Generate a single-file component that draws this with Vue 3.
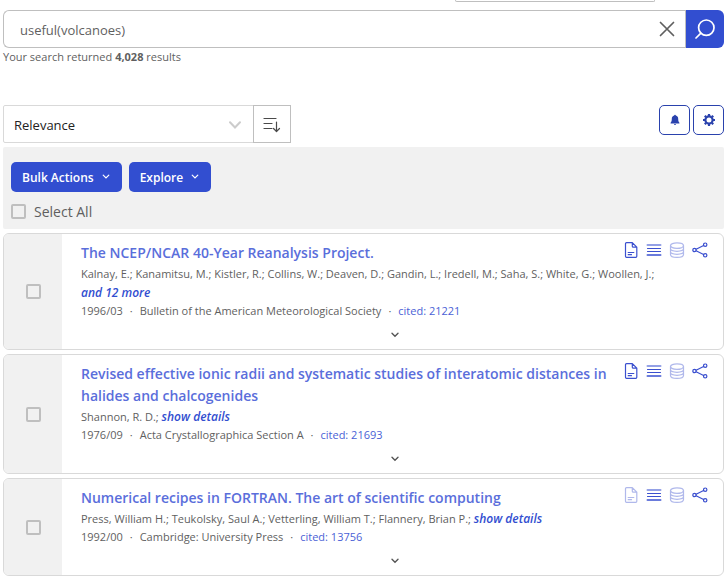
<script setup>
import { ref } from 'vue'

const query = ref('useful(volcanoes)')
const sort = ref('Relevance')
const results = [
  {
    id: 1,
    title: 'The NCEP/NCAR 40-Year Reanalysis Project.',
    authors: 'Kalnay, E.; Kanamitsu, M.; Kistler, R.; Collins, W.; Deaven, D.; Gandin, L.; Iredell, M.; Saha, S.; White, G.; Woollen, J.;',
    more: 'and 12 more',
    date: '1996/03',
    journal: 'Bulletin of the American Meteorological Society',
    cited: 21221,
    fullText: true,
  },
  {
    id: 2,
    title: 'Revised effective ionic radii and systematic studies of interatomic distances in halides and chalcogenides',
    authors: 'Shannon, R. D.;',
    more: 'show details',
    date: '1976/09',
    journal: 'Acta Crystallographica Section A',
    cited: 21693,
    fullText: true,
  },
  {
    id: 3,
    title: 'Numerical recipes in FORTRAN. The art of scientific computing',
    authors: 'Press, William H.; Teukolsky, Saul A.; Vetterling, William T.; Flannery, Brian P.;',
    more: 'show details',
    date: '1992/00',
    journal: 'Cambridge: University Press',
    cited: 13756,
    fullText: false,
  },
]
</script>

<template>
  <main class="page">
    <div class="stub"></div>
    <form class="search" @submit.prevent>
      <input v-model="query" class="search-input" type="text" aria-label="Search query" />
      <button class="clear" type="button" aria-label="Clear" @click="query = ''">
        <svg width="16" height="16" viewBox="0 0 16 16"><path d="M1.5 1.5 14.5 14.5M14.5 1.5 1.5 14.5" fill="none" stroke="#5f5f5f" stroke-width="1.7" stroke-linecap="round" /></svg>
      </button>
      <button class="submit" type="submit" aria-label="Search">
        <svg width="20" height="20" viewBox="0 0 20 20"><g fill="none" stroke="#fff" stroke-width="1.7" stroke-linecap="round"><circle cx="11.3" cy="8.7" r="7.7" /><path d="M5.9 14.2 1 19" /></g></svg>
      </button>
    </form>
    <p class="count">Your search returned <b>4,028</b> results</p>

    <div class="toolbar">
      <div class="sort">
        <select v-model="sort" class="sort-select" aria-label="Sort by">
          <option>Relevance</option>
          <option>Date</option>
          <option>Citation Count</option>
        </select>
        <svg class="sort-arrow" width="12" height="8" viewBox="0 0 12 8"><path d="M1 1.2 6 6.5 11 1.2" fill="none" stroke="#ccc" stroke-width="2" stroke-linecap="round" /></svg>
        <button class="sort-dir" type="button" aria-label="Sort descending">
          <svg width="18" height="17" viewBox="0 0 18 17"><path d="M1 2.5h12M1 7.5h8M1 12.5h8M13.5 6v9.5M10.5 12.5l3 3 3-3" fill="none" stroke="#4a4a4a" stroke-width="1.2" stroke-linecap="round" stroke-linejoin="round" /></svg>
        </button>
      </div>
      <div class="tools">
        <button class="tool" type="button" aria-label="Notifications">
          <svg width="10" height="12" viewBox="0 0 10 12"><path d="M5 .8a.8.8 0 0 1 .8.8C7.400 2 8.200 3.200 8.200 4.800c0 2.300.4 3.200 1.200 3.900v.9H.6v-.9c.8-.7 1.200-1.600 1.200-3.900C1.800 3.200 2.600 2 4.200 1.600A.8.8 0 0 1 5 .8ZM4 10h2a1 1 0 0 1-2 0Z" fill="#2a42ad" /></svg>
        </button>
        <button class="tool" type="button" aria-label="Settings">
          <svg width="14" height="14" viewBox="0 0 14 14"><circle cx="7" cy="7" r="3.600" fill="none" stroke="#2a42ad" stroke-width="2.200" /><path d="M7 1v2M7 11v2M1 7h2M11 7h2M2.800 2.800l1.300 1.300M9.900 9.900l1.300 1.300M11.200 2.800 9.900 4.100M4.100 9.900l-1.300 1.300" stroke="#2a42ad" stroke-width="2.200" /></svg>
        </button>
      </div>
    </div>

    <section class="actions">
      <div class="menus">
        <button v-for="name in ['Bulk Actions', 'Explore']" :key="name" class="menu" type="button">
          {{ name }}
          <svg width="8" height="6" viewBox="0 0 8 6"><path d="M1.200 1.200 4 4 6.800 1.200" fill="none" stroke="#fff" stroke-width="1.200" stroke-linecap="round" /></svg>
        </button>
      </div>
      <label class="select-all"><input class="check" type="checkbox" />Select All</label>
    </section>

    <article v-for="item in results" :key="item.id" class="card">
      <label class="pick"><input class="check" type="checkbox" :aria-label="'Select ' + item.title" /></label>
      <div class="body">
        <div class="head">
          <h2 class="title"><a href="#">{{ item.title }}</a></h2>
          <div class="icons">
            <button class="icon" :class="{ off: !item.fullText }" type="button" aria-label="Full text sources">
              <svg width="16" height="16" viewBox="0 0 16 16"><path d="M3.500.7h5.800l4.500 4.500v9.100a1 1 0 0 1-1 1H3.500a1 1 0 0 1-1-1V1.700a1 1 0 0 1 1-1ZM9.300.9v3.300a1 1 0 0 0 1 1h3.300M5.200 10.500h5.600M5.200 12.700h3.300" /></svg>
            </button>
            <button class="icon" type="button" aria-label="References and citations">
              <svg width="16" height="16" viewBox="0 0 16 16"><path d="M1.500 6.500h13M1.500 9.500h13" /><path class="soft" d="M1.500 3h13" /><path class="mid" d="M1.500 13h13" /></svg>
            </button>
            <button class="icon off" type="button" aria-label="Data products">
              <svg width="16" height="16" viewBox="0 0 16 16"><ellipse cx="8" cy="3.600" rx="6.500" ry="2.800" /><path d="M1.500 3.600v8.800c0 1.600 2.900 2.900 6.500 2.900s6.500-1.300 6.500-2.900V3.600M1.500 6.600c0 1.500 2.900 2.700 6.500 2.700s6.500-1.200 6.500-2.700M1.500 9.600c0 1.500 2.900 2.700 6.500 2.700s6.500-1.200 6.500-2.700" /></svg>
            </button>
            <button class="icon" type="button" aria-label="Share">
              <svg width="16" height="16" viewBox="0 0 16 16"><circle cx="2.500" cy="8" r="1.700" /><circle cx="13.200" cy="2.700" r="1.700" /><circle cx="13.200" cy="13.300" r="1.700" /><path d="m4.100 7.200 7.500-3.700M4.100 8.800l7.500 3.700" /></svg>
            </button>
          </div>
        </div>
        <p class="authors">{{ item.authors }} <a class="more" href="#">{{ item.more }}</a></p>
        <p class="meta">
          <span>{{ item.date }}</span><span>·</span><span>{{ item.journal }}</span><span>·</span><a href="#">cited: {{ item.cited }}</a>
        </p>
        <button class="expand" type="button" aria-label="Show abstract">
          <svg width="8" height="6" viewBox="0 0 8 6"><path d="M1 1.200 4 4.200 7 1.200" fill="none" stroke="#555" stroke-width="1.400" stroke-linecap="round" /></svg>
        </button>
      </div>
    </article>
  </main>
</template>

<style>
body {
  margin: 0;
  background: #fff;
}
</style>

<style scoped>
* {
  box-sizing: border-box;
}
.page {
  padding: 0 3px;
  font-family: "Open Sans", "Noto Sans", sans-serif;
  font-size: 11px;
  color: #5f5f5f;
}
button {
  font: inherit;
  padding: 0;
  border: 0;
  background: none;
}
svg {
  display: block;
}
a {
  color: #4a5fd6;
  text-decoration: none;
}
p,
h2 {
  margin: 0;
}
.stub {
  width: 200px;
  height: 2px;
  margin: 0 69px 8px auto;
  border: 1px solid #bfbfbf;
  border-top: 0;
  border-radius: 0 0 2px 2px;
}
.search {
  display: flex;
  height: 38px;
}
.search-input {
  flex: 1;
  min-width: 0;
  padding: 2px 0 0 16px;
  border: 1px solid #bfbfbf;
  border-right: 0;
  border-radius: 6px 0 0 6px;
  outline: 0;
  font: inherit;
  font-size: 13px;
  color: #5f5f5f;
}
.clear {
  display: grid;
  place-items: center;
  width: 38px;
  border: 1px solid #bfbfbf;
  border-width: 1px 1px 1px 0;
}
.submit {
  display: grid;
  place-items: center;
  width: 38px;
  border-radius: 0 6px 6px 0;
  background: #324ed0;
}
.count {
  line-height: 18px;
}
.toolbar {
  display: flex;
  justify-content: space-between;
  align-items: flex-start;
  margin-top: 39px;
}
.sort {
  display: flex;
  position: relative;
  height: 38px;
}
.sort-select {
  appearance: none;
  width: 251px;
  padding: 2px 0 0 10px;
  border: 1px solid #d9d9d9;
  border-radius: 2px 0 0 2px;
  background: #fff;
  font: inherit;
  font-size: 13px;
  color: #222;
}
.sort-arrow {
  position: absolute;
  left: 226px;
  top: 16px;
  pointer-events: none;
}
.sort-dir {
  display: grid;
  place-items: center;
  width: 38px;
  margin-left: -1px;
  border: 1px solid #bfbfbf;
}
.tools {
  display: flex;
  gap: 3px;
}
.tool {
  display: grid;
  place-items: center;
  width: 31px;
  height: 30px;
  border: 1px solid #2a42ad;
  border-radius: 5px;
}
.actions {
  margin: 4px 0;
  padding: 15px 8px 7px;
  border-radius: 2px;
  background: #f1f1f1;
}
.menus {
  display: flex;
  gap: 7px;
}
.menu {
  display: flex;
  align-items: center;
  gap: 8px;
  height: 30px;
  padding: 0 12px 0 11px;
  border-radius: 5px;
  background: #324ed0;
  color: #fff;
  font-size: 12px;
  font-weight: 600;
}
.select-all {
  display: flex;
  align-items: center;
  gap: 8px;
  height: 22px;
  margin-top: 8px;
  font-size: 14px;
}
.check {
  appearance: none;
  width: 15px;
  height: 15px;
  margin: 0;
  border: 2px solid #bfbfbf;
  border-radius: 2px;
}
.card {
  display: flex;
  margin-bottom: 4px;
  border: 1px solid #d9d9d9;
  border-radius: 6px;
  overflow: hidden;
}
.pick {
  display: grid;
  place-items: center;
  flex: none;
  width: 58px;
  padding-left: 1px;
  background: #f1f1f1;
}
.body {
  flex: 1;
  min-width: 0;
  padding: 8px 15px 0 19px;
}
.head {
  display: flex;
  gap: 12px;
}
.title {
  flex: 1;
  font-size: 14px;
  font-weight: 600;
  line-height: 22px;
}
.title a {
  color: #5a6edb;
}
.icons {
  display: flex;
  gap: 7px;
  height: 16px;
}
.icon svg {
  fill: none;
  stroke: #3b50cf;
  stroke-width: 1.2;
  stroke-linecap: round;
  stroke-linejoin: round;
}
.icon .soft {
  stroke: #94a1e6;
  stroke-width: 2;
}
.icon .mid {
  stroke: #6a7bdc;
  stroke-width: 2;
}
.off {
  opacity: 0.4;
}
.authors {
  line-height: 19px;
}
.more {
  display: inline-block;
  color: #324ed0;
  font-size: 12px;
  font-style: italic;
  font-weight: 600;
  line-height: 18px;
  white-space: nowrap;
}
.meta {
  display: flex;
  gap: 7px;
  line-height: 18px;
}
.expand {
  display: grid;
  place-items: center;
  width: 100%;
  height: 29px;
}
</style>
